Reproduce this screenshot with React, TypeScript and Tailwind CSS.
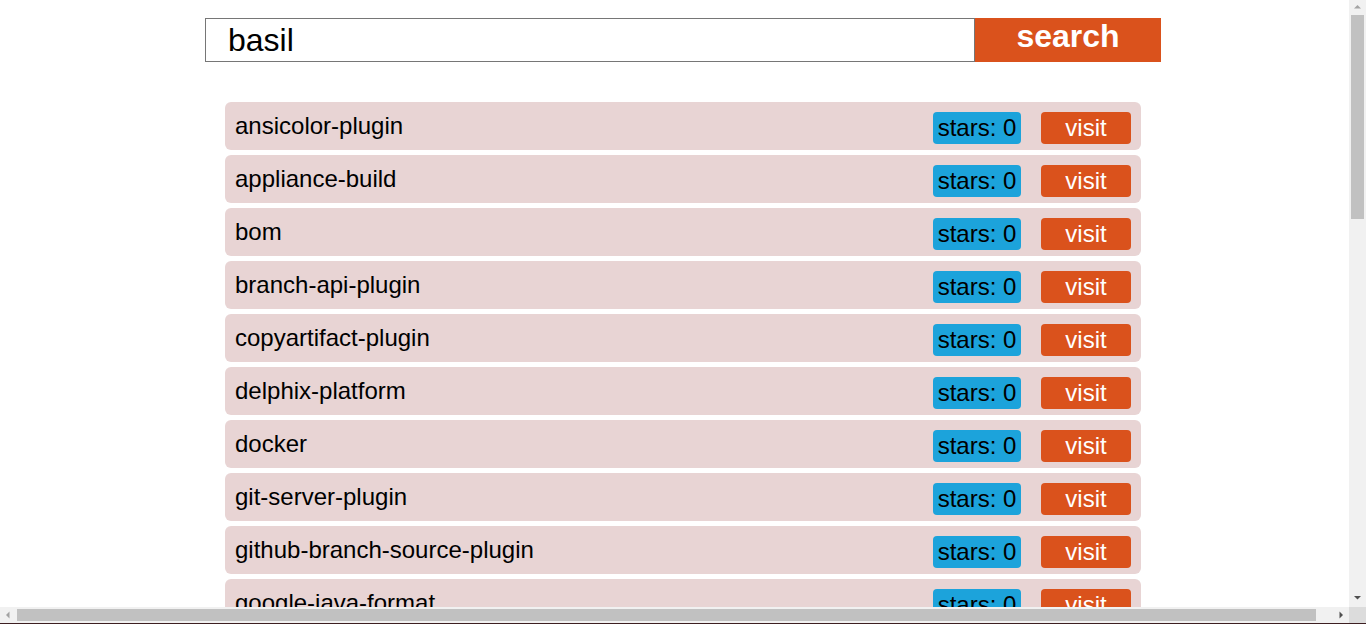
import React from "react";

const repos = [
  "ansicolor-plugin",
  "appliance-build",
  "bom",
  "branch-api-plugin",
  "copyartifact-plugin",
  "delphix-platform",
  "docker",
  "git-server-plugin",
  "github-branch-source-plugin",
  "google-java-format",
  "jenkins",
  "jenkins-test-harness",
  "junit-plugin",
  "linux-pkg",
  "mailer-plugin",
  "maven-plugin",
  "pipeline-model-definition-plugin",
  "plugin-pom",
  "remoting",
  "scm-api-plugin",
  "script-security-plugin",
  "structs-plugin",
  "swarm-plugin",
  "timestamper-plugin",
  "virtualization-sdk",
  "workflow-cps-plugin",
  "workflow-job-plugin",
  "workflow-multibranch-plugin",
  "zfs",
  "zfs-tests",
];

function RepoRow({ name }: { name: string }) {
  return (
    <li className="flex h-[48px] shrink-0 items-start justify-between rounded-[6px] bg-[#e8d4d4] px-[10px] pt-[10px]">
      <span className="text-[24px] leading-[28px] text-black">{name}</span>
      <div className="flex gap-[20px]">
        <span className="flex h-[32px] w-[88px] items-center justify-center rounded-[4px] bg-[#1ca3db] text-[24px] text-black">
          stars: 0
        </span>
        <button className="flex h-[32px] w-[90px] items-center justify-center rounded-[4px] bg-[#da521c] text-[24px] text-white">
          visit
        </button>
      </div>
    </li>
  );
}

// the browser's own scrollbars, as they show in the screenshot
function Scrollbars() {
  return (
    <>
      <div className="fixed right-0 top-0 flex h-[607px] w-[17px] flex-col items-center bg-[#f1f1f1]">
        <svg width="17" height="15" viewBox="0 0 17 15" className="shrink-0">
          <path d="M5 8.5 L8.5 5 L12 8.5 Z" fill="#a3a3a3" />
        </svg>
        <div className="h-[204px] w-[13px] bg-[#c1c1c1]" />
        <div className="flex-1" />
        <svg width="17" height="17" viewBox="0 0 17 17" className="shrink-0">
          <path d="M5 6 L12 6 L8.5 9.5 Z" fill="#505050" />
        </svg>
      </div>
      <div className="fixed bottom-0 left-0 flex h-[17px] w-[1366px] items-center border-b border-[#3d1f22] bg-[#f1f1f1]">
        <svg width="17" height="16" viewBox="0 0 17 16" className="shrink-0">
          <path d="M9.5 4.5 L6 8 L9.5 11.5 Z" fill="#a3a3a3" />
        </svg>
        <div className="h-[12px] w-[1299px] bg-[#c1c1c1]" />
        <div className="flex-1" />
        <svg width="17" height="16" viewBox="0 0 17 16" className="shrink-0">
          <path d="M7.5 4.5 L11 8 L7.5 11.5 Z" fill="#505050" />
        </svg>
        <div className="h-[16px] w-[17px] shrink-0 bg-[#dcdcdc]" />
      </div>
    </>
  );
}

export default function App() {
  return (
    <main className="w-[100vw] bg-white pb-[30px] font-['Liberation_Sans',Arial,sans-serif]">
      <div className="flex justify-center pt-[18px]">
        <input
          defaultValue="basil"
          className="h-[44px] w-[770px] border border-[#767676] bg-white px-[22px] text-[32px] text-black outline-none"
        />
        <button className="h-[44px] w-[186px] bg-[#da521c] pb-[9px] text-[32px] leading-none font-bold text-white">
          search
        </button>
      </div>
      <ul className="mx-auto mt-[40px] flex w-[916px] flex-col gap-[5px]">
        {repos.map((r) => (
          <RepoRow key={r} name={r} />
        ))}
      </ul>
      <Scrollbars />
    </main>
  );
}
